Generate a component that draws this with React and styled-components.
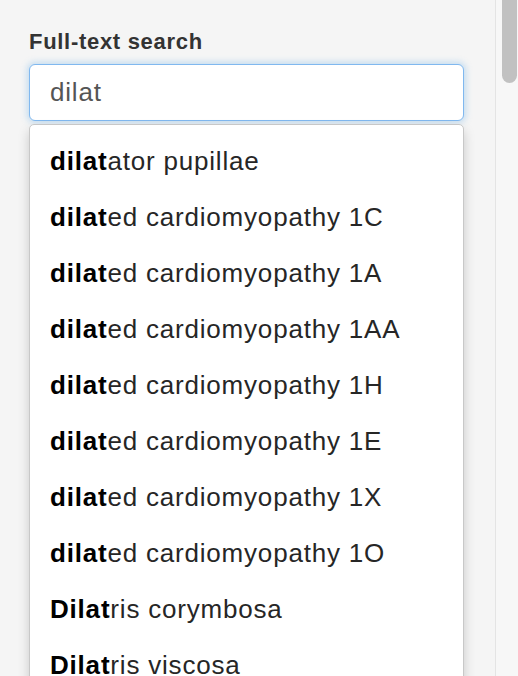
import React from 'react'
import styled, { createGlobalStyle } from 'styled-components'

const Global = createGlobalStyle`
  html, body {
    margin: 0;
    padding: 0;
    height: 676px;
    overflow: hidden;
    background: #f5f5f5;
    font-family: "Liberation Sans", Arial, sans-serif;
  }
`;

const Page = styled.div`
  display: flex;
  height: 676px;
`;

const Panel = styled.div`
  flex: 1;
  padding: 29px 31px 0 29px;
  overflow: hidden;
`;

const Track = styled.div`
  width: 22px;
  border-left: 1px solid #e4e4e4;
  background: #f7f7f7;
  display: flex;
  justify-content: flex-end;
`;

const Thumb = styled.div`
  width: 15px;
  height: 83px;
  margin-right: 1px;
  background: #c1c1c1;
  border-radius: 0 0 8px 8px;
`;

const Label = styled.label`
  display: block;
  font-size: 22px;
  letter-spacing: 0.7px;
  font-weight: 700;
  color: #333;
  margin-bottom: 10px;
  line-height: 25px;
`;

const Input = styled.div`
  box-sizing: border-box;
  height: 57px;
  border: 1px solid #80b8ef;
  border-radius: 6px;
  background: #fff;
  box-shadow: 0 0 6px 2px rgba(102, 175, 233, 0.35);
  padding: 0 20px;
  display: flex;
  align-items: center;
  font-size: 26px;
  letter-spacing: 0.8px;
  color: #555;
`;

const Menu = styled.ul`
  list-style: none;
  margin: 3px 0 0;
  padding: 8px 0;
  background: #fff;
  border: 1px solid #c8c8c8;
  border-radius: 5px;
  box-shadow: 0 6px 12px rgba(0, 0, 0, 0.18);
`;

const Item = styled.li`
  height: 56px;
  display: flex;
  align-items: center;
  padding: 0 20px;
  font-size: 26px;
  letter-spacing: 0.8px;
  color: #262626;
  white-space: nowrap;
`;

const Match = styled.b`
  color: #000;
  font-weight: 700;
`;

const items = [
  ['dilat', 'ator pupillae'],
  ['dilat', 'ed cardiomyopathy 1C'],
  ['dilat', 'ed cardiomyopathy 1A'],
  ['dilat', 'ed cardiomyopathy 1AA'],
  ['dilat', 'ed cardiomyopathy 1H'],
  ['dilat', 'ed cardiomyopathy 1E'],
  ['dilat', 'ed cardiomyopathy 1X'],
  ['dilat', 'ed cardiomyopathy 1O'],
  ['Dilat', 'ris corymbosa'],
  ['Dilat', 'ris viscosa'],
]

const App = () => {
  return (
    <>
      <Global />
      <Page>
        <Panel>
          <Label>Full-text search</Label>
          <Input>dilat</Input>
          <Menu>
            {items.map(([m, rest], i) => (
              <Item key={i}>
                <Match>{m}</Match>{rest}
              </Item>
            ))}
          </Menu>
        </Panel>
        <Track>
          <Thumb />
        </Track>
      </Page>
    </>
  )
}

export default App
